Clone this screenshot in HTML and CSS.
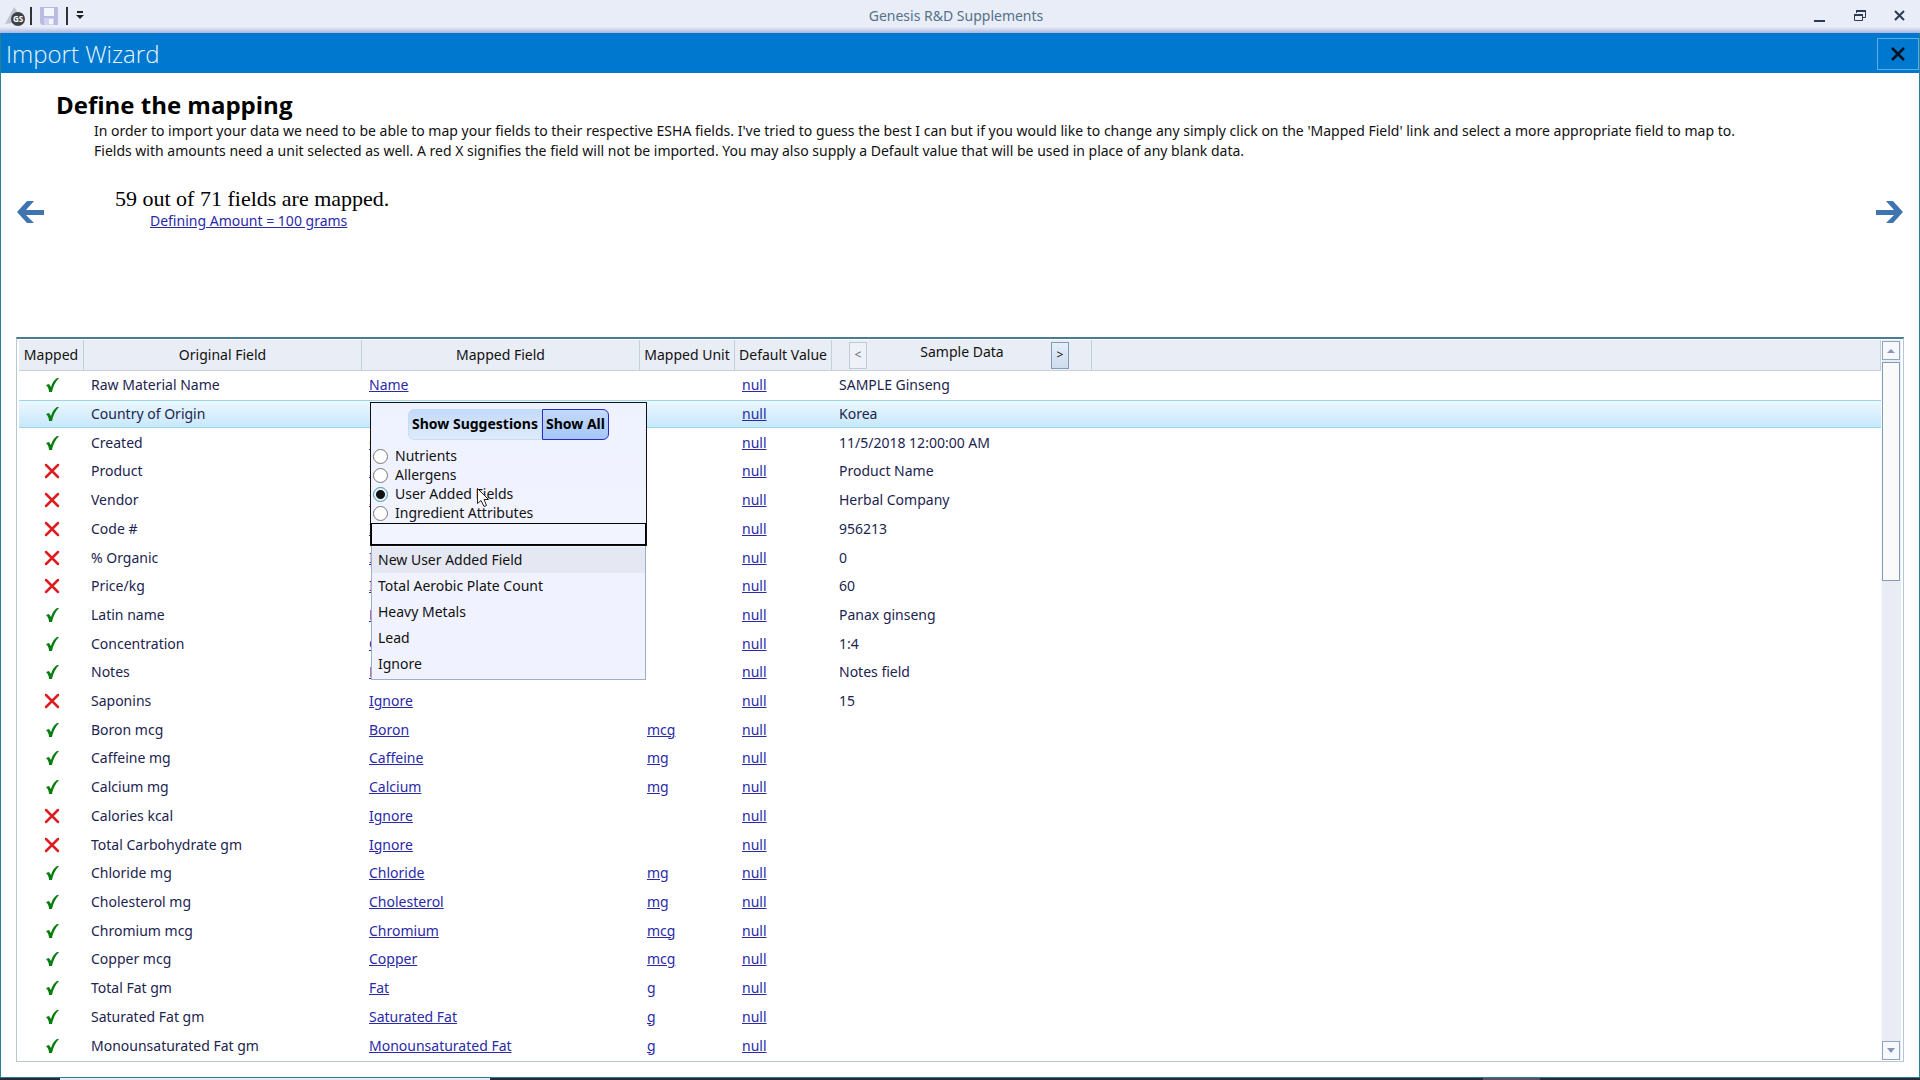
FILE: index.html
```html
<!DOCTYPE html>
<html lang="en">
<head>
<meta charset="utf-8">
<title>Genesis R&amp;D Supplements</title>
<link rel="stylesheet" href="styles.css">
</head>
<body>
<header class="titlebar">
  <div class="quick">
    <svg class="logo" width="21" height="20" viewBox="0 0 21 20" aria-hidden="true"><path d="M9 1 L14 8 L8 17 L0 18 Z" fill="#c3c5cd"/><circle cx="13" cy="13" r="7" fill="#3f4148"/><text x="13" y="16" class="logo-text" text-anchor="middle">GS</text></svg>
    <span class="sep"></span>
    <button class="plain" aria-label="Save"><svg width="18" height="18" viewBox="0 0 18 18"><path d="M0 0h18v18H2l-2-2z" fill="#b9bbe0"/><path d="M4 1h10v8H4z" fill="#f4f6fd"/><path d="M4 11h10v7H4z" fill="#cfd4ee"/><path d="M9 12h4v5H9z" fill="#f4f6fd"/></svg></button>
    <span class="sep"></span>
    <button class="plain" aria-label="Customize toolbar"><svg width="8" height="9" viewBox="0 0 8 9"><path d="M1 0h6v2H1zM0 4h8L4 8z" fill="#222"/></svg></button>
  </div>
  <h1 class="app-title">Genesis R&amp;D Supplements</h1>
  <div class="winbtns">
    <button class="plain" aria-label="Minimize"><svg width="14" height="14" viewBox="0 0 14 14"><path d="M1 11h11v2H1z" fill="#2b3a55"/></svg></button>
    <button class="plain" aria-label="Restore"><svg width="14" height="14" viewBox="0 0 14 14" fill="none" stroke="#2b3a55"><path d="M3.500 4V1.500h9v7H10" /><path d="M3 2h10" stroke-width="2"/><path d="M1.500 5.500h8v6h-8z"/><path d="M1 6h9" stroke-width="2"/></svg></button>
    <button class="plain" aria-label="Close"><svg width="14" height="14" viewBox="0 0 14 14"><path d="M2 2l9 9M11 2l-9 9" stroke="#2b3a55" stroke-width="2"/></svg></button>
  </div>
</header>
<main class="window">
  <div class="wizard-bar"><h2 class="wizard-title">Import Wizard</h2>
    <button class="wizard-close" aria-label="Close wizard"><svg width="14" height="14" viewBox="0 0 14 14"><path d="M1 1l12 12M13 1L1 13" stroke="#06121f" stroke-width="2.500"/></svg></button></div>
  <section class="intro">
    <button class="plain arrow" aria-label="Back"><svg width="28" height="22" viewBox="0 0 28 22"><path d="M0 11L10 0h7L9 9h18v5H9l8 8h-7z" fill="#3e75b0"/></svg></button>
    <div class="intro-text">
      <h3 class="heading">Define the mapping</h3>
      <p class="help">In order to import your data we need to be able to map your fields to their respective ESHA fields. I've tried to guess the best I can but if you would like to change any simply click on the 'Mapped Field' link and select a more appropriate field to map to.<br>Fields with amounts need a unit selected as well. A red X signifies the field will not be imported. You may also supply a Default value that will be used in place of any blank data.</p>
      <p class="count">59 out of 71 fields are mapped.</p>
      <a class="defining" href="#">Defining Amount = 100 grams</a>
    </div>
    <button class="plain arrow" aria-label="Next"><svg width="28" height="22" viewBox="0 0 28 22"><path d="M27 11L17 0h-7l8 9H0v5h18l-8 8h7z" fill="#3e75b0"/></svg></button>
  </section>
  <section class="grid">
    <table class="map">
      <colgroup><col class="c-mapped"><col class="c-field"><col class="c-field"><col class="c-unit"><col class="c-default"><col class="c-sample"><col></colgroup>
      <thead><tr><th>Mapped</th><th>Original Field</th><th>Mapped Field</th><th>Mapped Unit</th><th>Default Value</th>
        <th><div class="sample-head"><button class="step" disabled>&lt;</button><span class="sample-label">Sample Data</span><button class="step">&gt;</button></div></th><th></th></tr></thead>
      <tbody id="rows"></tbody>
    </table>
    <div class="scroll" aria-hidden="true">
      <button class="sb" tabindex="-1"><svg width="8" height="4" viewBox="0 0 8 4"><path d="M4 0l4 4H0z" fill="#8797b3"/></svg></button>
      <div class="thumb"></div>
      <button class="sb sb-down" tabindex="-1"><svg width="8" height="5" viewBox="0 0 8 5"><path d="M0 0h8L4 5z" fill="#8797b3"/></svg></button>
    </div>
  </section>
</main>
<footer class="taskbar"><span class="task"></span><span class="task-dim"></span></footer>
<template id="picker">
  <div class="picker">
    <div class="picker-top">
      <div class="modes"><button class="mode">Show Suggestions</button><button class="mode mode-on">Show All</button></div>
      <label class="opt"><input type="radio" name="kind">Nutrients</label>
      <label class="opt"><input type="radio" name="kind">Allergens</label>
      <label class="opt"><input type="radio" name="kind" checked>User Added Fields</label>
      <label class="opt"><input type="radio" name="kind">Ingredient Attributes</label>
      <input class="search" type="text" aria-label="Filter fields">
    </div>
    <ul class="choices"><li class="choice choice-on">New User Added Field</li><li class="choice">Total Aerobic Plate Count</li><li class="choice">Heavy Metals</li><li class="choice">Lead</li><li class="choice">Ignore</li></ul>
    <svg class="cursor" width="14" height="22" viewBox="0 0 14 22" aria-hidden="true"><path d="M1.500 1.500v15l3.500-3 3 6 2.500-1-2.500-6h4.500z" fill="#fff" stroke="#222"/></svg>
  </div>
</template>
<script src="rows.js"></script>
</body>
</html>
```
FILE: rows.js
```js
// mapped, original field, mapped field, unit, sample
const rows = [
  [1, "Raw Material Name", "Name", "", "SAMPLE Ginseng"],
  [1, "Country of Origin", "", "", "Korea"],
  [1, "Created", "Created", "", "11/5/2018 12:00:00 AM"],
  [0, "Product", "Ignore", "", "Product Name"],
  [0, "Vendor", "Ignore", "", "Herbal Company"],
  [0, "Code #", "Ignore", "", "956213"],
  [0, "% Organic", "Ignore", "", "0"],
  [0, "Price/kg", "Ignore", "", "60"],
  [1, "Latin name", "Latin name", "", "Panax ginseng"],
  [1, "Concentration", "Concentration", "", "1:4"],
  [1, "Notes", "Notes", "", "Notes field"],
  [0, "Saponins", "Ignore", "", "15"],
  [1, "Boron mcg", "Boron", "mcg", ""],
  [1, "Caffeine mg", "Caffeine", "mg", ""],
  [1, "Calcium mg", "Calcium", "mg", ""],
  [0, "Calories kcal", "Ignore", "", ""],
  [0, "Total Carbohydrate gm", "Ignore", "", ""],
  [1, "Chloride mg", "Chloride", "mg", ""],
  [1, "Cholesterol mg", "Cholesterol", "mg", ""],
  [1, "Chromium mcg", "Chromium", "mcg", ""],
  [1, "Copper mcg", "Copper", "mcg", ""],
  [1, "Total Fat gm", "Fat", "g", ""],
  [1, "Saturated Fat gm", "Saturated Fat", "g", ""],
  [1, "Monounsaturated Fat gm", "Monounsaturated Fat", "g", ""]
];
const yes = '<svg class="mark" width="14" height="16" viewBox="0 0 14 16" role="img" aria-label="Mapped"><path d="M1 8l3-1 2 3C7 6 9 3 12 1l2 0C10 5 8 10 7 15H4C4 12 3 10 1 8z" fill="#0a7d12"/></svg>';
const no = '<svg class="mark" width="16" height="16" viewBox="0 0 16 16" role="img" aria-label="Not mapped"><path d="M2 2l12 12M14 2L2 14" stroke="#dc1e22" stroke-width="2.500" stroke-linecap="round"/></svg>';
const link = t => t ? `<a href="#">${t}</a>` : "";
document.getElementById("rows").innerHTML = rows.map((r, i) =>
  `<tr${i === 1 ? ' class="selected"' : ""}><td class="mark-cell">${r[0] ? yes : no}</td><td>${r[1]}</td><td>${link(r[2])}</td><td>${link(r[3])}</td><td>${link("null")}</td><td colspan="2">${r[4]}</td></tr>`).join("");
document.querySelector(".selected").children[2].append(document.getElementById("picker").content.cloneNode(true));
```
FILE: styles.css
```css
* { box-sizing: border-box; }
html, body { height: 100%; }
body { margin: 0; display: flex; flex-direction: column; min-height: 100vh; font-family: "Noto Sans", sans-serif; font-size: 14px; line-height: 20px; color: #111; background: #fff; }
h1, h2, h3, p, ul { margin: 0; padding: 0; font-weight: 400; }
button, input { font: inherit; color: inherit; margin: 0; }
.plain { border: 0; padding: 0; background: none; display: flex; align-items: center; justify-content: center; }
a { color: #2a2aa8; }

.titlebar { height: 33px; flex: none; display: grid; grid-template-columns: 1fr auto 1fr; align-items: center; padding: 0 13px 2px 5px; background: linear-gradient(#e9edf7 27px, #aab4dc 33px); }
.quick { display: flex; align-items: center; gap: 4px; }
.quick .sep { width: 2px; height: 18px; background: #333; }
.logo-text { font-family: "Open Sans", sans-serif; font-size: 8px; font-weight: 700; fill: #fff; }
.quick .plain { padding: 0 4px; }
.app-title { font-size: 14px; color: #55718a; }
.winbtns { display: flex; justify-content: flex-end; gap: 26px; }

.window { flex: 1; display: flex; flex-direction: column; border: 1px solid #2a7f98; border-top: 0; min-height: 0; }
.wizard-bar { height: 40px; flex: none; display: flex; align-items: center; justify-content: space-between; background: #0078cf; padding: 2px 0 0 5px; }
.wizard-title { font-family: "Open Sans", sans-serif; font-size: 24px; line-height: 32px; font-weight: 300; color: #e8f6ff; }
.wizard-close { width: 42px; height: 32px; padding: 0; border: 1px solid #59aee6; background: none; display: flex; align-items: center; justify-content: center; }

.intro { height: 264px; flex: none; display: flex; padding: 16px 15px 0 16px; }
.arrow { width: 28px; height: 246px; flex: none; }
.intro-text { flex: 1; padding-left: 11px; }
.heading { font-family: "Open Sans", sans-serif; font-size: 24px; line-height: 32px; font-weight: 700; color: #000; }
.help { padding-left: 38px; white-space: nowrap; }
.count { padding: 26px 0 0 59px; font-family: "Liberation Serif", serif; font-size: 22px; line-height: 24px; color: #000; }
.defining { display: inline-block; margin-left: 94px; }

.grid { flex: 1; margin: 0 15px 15px; display: flex; min-height: 0; border: 1px solid #b5c8d4; border-top: 2px solid #4b7d90; padding: 1px 2px; }
.map { flex: 1; height: 100%; table-layout: fixed; border-collapse: separate; border-spacing: 0; color: #1c2450; }
.c-mapped { width: 65px; }
.c-field { width: 278px; }
.c-unit { width: 95px; }
.c-default { width: 97px; }
.c-sample { width: 260px; }
.map th { height: 31px; padding: 0; font-weight: 400; color: #111; background: #e9edf5; border-right: 1px solid #c3d0dc; border-bottom: 1px solid #c9ced8; white-space: nowrap; }
.map td { padding: 0 7px; white-space: nowrap; border: solid transparent; border-width: 1px 0; }
.map .mark-cell { padding: 0; text-align: center; }
.mark { display: block; margin: 0 auto; }
.selected td { position: relative; background: linear-gradient(#ecf8fe, #c6e7fb) border-box; border-color: #9fd3e6; }
.sample-head { display: flex; align-items: center; justify-content: space-between; padding: 0 22px 0 17px; }
.sample-label { padding: 0 0 6px 6px; }
.step { width: 18px; height: 27px; padding: 0; font-size: 12px; border: 1px solid #7f9db9; background: linear-gradient(#e6eefa, #cddcee); }
.step:disabled { border-color: #c0cbd9; background: #eef2f8; color: #667; }

.scroll { width: 20px; flex: none; display: flex; flex-direction: column; gap: 2px; padding-top: 1px; background: #e9ecf5; border-left: 1px solid #f5f7fb; }
.sb { width: 18px; height: 19px; padding: 0; border: 1px solid #8fa5bd; background: #f6f8fc; display: flex; align-items: center; justify-content: center; }
.sb-down { margin-top: auto; }
.thumb { width: 18px; height: 219px; border: 1px solid #7f9db9; background: #fafafb; }

.picker { position: absolute; z-index: 2; left: 8px; top: 1px; width: 277px; color: #111; }
.picker-top { border: 1px solid #111; background: linear-gradient(#eef2ff, #f2f4ff); }
.modes { display: flex; justify-content: center; padding: 6px 0 7px; }
.mode { height: 31px; padding: 0 3px; border: 1px solid #c9dcf6; border-radius: 6px 0 0 6px; background: linear-gradient(#c3dafa, #dfebfc); font-weight: 700; font-size: 14px; color: #000; }
.mode-on { border-color: #2a2ac8; border-radius: 0 6px 6px 0; background: linear-gradient(#c3dafa, #a5c6f8); }
.opt { display: flex; align-items: center; gap: 7px; height: 19px; padding-left: 2px; }
.opt input { appearance: none; width: 15px; height: 15px; border: 1px solid #777; border-radius: 50%; background: #fff; }
.opt input:checked { border-color: #4f93a8; background: radial-gradient(circle, #111 4px, #e4f1f8 5px); }
.search { display: block; width: 100%; height: 22px; border: 1px solid #000; background: #f2f4ff; outline: 0; }
.choices { list-style: none; margin: 0 1px; padding: 1px 0 2px; border: 1px solid #9ab0cc; border-top: 0; background: #f0f3ff; }
.choice { height: 26px; line-height: 26px; padding-left: 6px; }
.choice-on { background: #e5e8f3; }
.cursor { position: absolute; left: 106px; top: 85px; }

.taskbar { height: 2px; flex: none; background: #232b38; display: flex; justify-content: space-between; padding: 0 380px 0 60px; }
.task { width: 430px; background: #e9edf3; }
.task-dim { width: 57px; background: #5a5062; }
```
